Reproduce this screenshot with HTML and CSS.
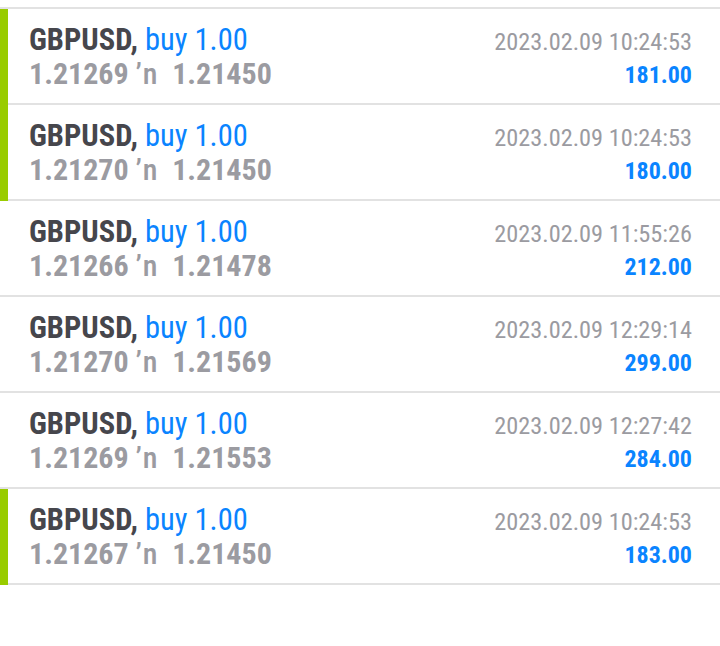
FILE: index.html
```html
<!DOCTYPE html>
<html lang="en">
<head>
  <meta charset="UTF-8">
  <title>Trades</title>
  <link rel="stylesheet" href="styles.css">
</head>
<body>

<div class="trade-list">
  <div class="trade active">
    <div class="left">
      <div class="title"><span class="symbol">GBPUSD,</span> <span class="side">buy 1.00</span></div>
      <div class="prices">1.21269 <span class="arrow">’n</span>&nbsp; 1.21450</div>
    </div>
    <div class="right">
      <div class="date">2023.02.09 10:24:53</div>
      <div class="profit">181.00</div>
    </div>
  </div>
  <div class="trade active">
    <div class="left">
      <div class="title"><span class="symbol">GBPUSD,</span> <span class="side">buy 1.00</span></div>
      <div class="prices">1.21270 <span class="arrow">’n</span>&nbsp; 1.21450</div>
    </div>
    <div class="right">
      <div class="date">2023.02.09 10:24:53</div>
      <div class="profit">180.00</div>
    </div>
  </div>
  <div class="trade">
    <div class="left">
      <div class="title"><span class="symbol">GBPUSD,</span> <span class="side">buy 1.00</span></div>
      <div class="prices">1.21266 <span class="arrow">’n</span>&nbsp; 1.21478</div>
    </div>
    <div class="right">
      <div class="date">2023.02.09 11:55:26</div>
      <div class="profit">212.00</div>
    </div>
  </div>
  <div class="trade">
    <div class="left">
      <div class="title"><span class="symbol">GBPUSD,</span> <span class="side">buy 1.00</span></div>
      <div class="prices">1.21270 <span class="arrow">’n</span>&nbsp; 1.21569</div>
    </div>
    <div class="right">
      <div class="date">2023.02.09 12:29:14</div>
      <div class="profit">299.00</div>
    </div>
  </div>
  <div class="trade">
    <div class="left">
      <div class="title"><span class="symbol">GBPUSD,</span> <span class="side">buy 1.00</span></div>
      <div class="prices">1.21269 <span class="arrow">’n</span>&nbsp; 1.21553</div>
    </div>
    <div class="right">
      <div class="date">2023.02.09 12:27:42</div>
      <div class="profit">284.00</div>
    </div>
  </div>
  <div class="trade active">
    <div class="left">
      <div class="title"><span class="symbol">GBPUSD,</span> <span class="side">buy 1.00</span></div>
      <div class="prices">1.21267 <span class="arrow">’n</span>&nbsp; 1.21450</div>
    </div>
    <div class="right">
      <div class="date">2023.02.09 10:24:53</div>
      <div class="profit">183.00</div>
    </div>
  </div>
</div>

</body>
</html>
```

FILE: styles.css
```css
* {
  margin: 0;
  padding: 0;
  box-sizing: border-box;
}

body {
  font-family: 'Roboto Condensed', Roboto, sans-serif;
  background: #fff;
  width: 720px;
  height: 646px;
  overflow: hidden;
}

.trade-list {
  padding-top: 7px;
}

.trade {
  position: relative;
  display: flex;
  justify-content: space-between;
  height: 96px;
  padding: 0 28px 0 29px;
  border-bottom: 2px solid #e2e2e2;
}

.trade:first-child {
  height: 98px;
  border-top: 2px solid #e2e2e2;
}

.trade.active::before {
  content: '';
  position: absolute;
  left: 0;
  top: 0;
  bottom: -2px;
  width: 8px;
  background: #99cc00;
}

.left {
  padding-top: 14px;
}

.title {
  font-size: 30.5px;
  line-height: 34px;
}

.symbol {
  font-weight: 700;
  color: #46464c;
}

.side {
  color: #0a84ff;
}

.prices {
  font-size: 30px;
  line-height: 34px;
  font-weight: 700;
  color: #9b9ba1;
  white-space: nowrap;
}

.arrow {
  font-weight: 500;
  letter-spacing: 1px;
}

.right {
  text-align: right;
  padding-top: 18px;
}

.date {
  font-size: 24.3px;
  line-height: 30px;
  color: #9b9ba1;
}

.profit {
  font-size: 24px;
  line-height: 36px;
  font-weight: 700;
  color: #0a84ff;
}
```
